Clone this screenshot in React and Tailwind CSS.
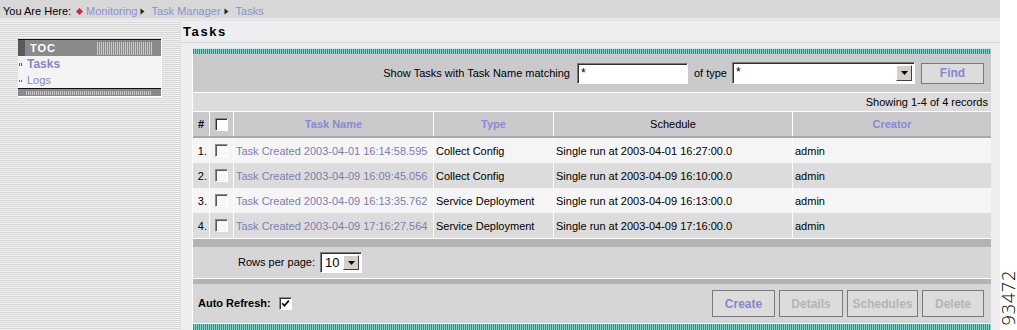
const rows = [
  ["1.", "Task Created 2003-04-01 16:14:58.595", "Collect Config", "Single run at 2003-04-01 16:27:00.0", "admin"],
  ["2.", "Task Created 2003-04-09 16:09:45.056", "Collect Config", "Single run at 2003-04-09 16:10:00.0", "admin"],
  ["3.", "Task Created 2003-04-09 16:13:35.762", "Service Deployment", "Single run at 2003-04-09 16:13:00.0", "admin"],
  ["4.", "Task Created 2003-04-09 17:16:27.564", "Service Deployment", "Single run at 2003-04-09 17:16:00.0", "admin"],
];

function Sep() {
  return (
    <svg width="5" height="7" viewBox="0 0 5 7" className="mx-[3px]">
      <path d="M0.5 0.5 L4.5 3.5 L0.5 6.5 Z" fill="#222" />
    </svg>
  );
}

function Check({ checked, header }) {
  return (
    <span
      className={
        "w-[13px] h-[13px] flex items-center justify-center border border-t-[#8a8a8a] border-l-[#8a8a8a] border-b-white border-r-white " +
        (header ? "bg-white shadow-[inset_1px_1px_0_#303030]" : "bg-[#f7f7f7] shadow-[inset_1px_1px_0_#5a5a5a]")
      }
    >
      {checked && (
        <svg width="9" height="9" viewBox="0 0 9 9">
          <path d="M1.2 4.3 L3.4 6.8 L7.8 1.6" stroke="#000" strokeWidth="1.7" fill="none" />
        </svg>
      )}
    </span>
  );
}

function ArrowBtn() {
  return (
    <span className="w-[16px] h-full flex items-center justify-center bg-[#d4d0c8] border border-t-white border-l-white border-r-[#404040] border-b-[#404040]">
      <svg width="7" height="4" viewBox="0 0 7 4">
        <path d="M0 0 L7 0 L3.5 4 Z" fill="#000" />
      </svg>
    </span>
  );
}

function Btn({ children, active }) {
  return (
    <span
      className={
        "h-[27px] flex items-center justify-center bg-[#dcdcdc] border border-[#7a7a7a] text-[12px] font-bold " +
        (active ? "text-[#8787c9]" : "text-[#b5b5b5]")
      }
    >
      {children}
    </span>
  );
}

const teal =
  "bg-[repeating-linear-gradient(to_right,#2a8f86_0px,#2a8f86_1px,#86d3cb_1px,#86d3cb_2px)]";

export default function App() {
  return (
    <div className="w-[1017px] h-[330px] overflow-hidden flex bg-white font-['Liberation_Sans',Arial,sans-serif] text-[11px] text-black leading-none">
      <div className="w-[1000px] flex flex-col">
        {/* breadcrumb */}
        <div className="h-[21px] shrink-0 flex items-center pl-[3px] pt-[1px] bg-[linear-gradient(to_bottom,#d8d8d8_0px,#d8d8d8_18px,#e6e6e6_18px)] text-[11px]">
          <span>You Are Here:</span>
          <span className="w-[5px] h-[5px] bg-[#e0203a] rotate-45 ml-[6px] mr-[4px]" />
          <span className="text-[#8f8fcf]">Monitoring</span>
          <Sep />
          <span className="ml-[3px] text-[#8f8fcf]">Task Manager</span>
          <Sep />
          <span className="ml-[4px] text-[#8f8fcf]">Tasks</span>
        </div>

        <div className="flex flex-1 min-h-0">
          {/* sidebar */}
          <div className="w-[180px] shrink-0 bg-[repeating-linear-gradient(to_bottom,#f2f2f2_0px,#f2f2f2_1px,#d6d6d6_1px,#d6d6d6_2px)] pt-[18px] pl-[18px]">
            <div className="w-[144px] flex flex-col border-r border-b border-white">
              <div className="h-[17px] flex bg-[#8a8a8a] border-t border-[#111]">
                <span className="w-[7px] bg-[#5a5a5a]" />
                <span className="pl-[5px] text-white font-bold text-[11px] tracking-[1px] self-center">TOC</span>
                <span className="flex-1" />
                <span className={"w-[55px] h-[13px] self-center bg-[repeating-linear-gradient(to_right,#c9c9c9_0px,#c9c9c9_1px,#8a8a8a_1px,#8a8a8a_2px)]"} />
                <span className="w-[9px]" />
              </div>
              <div className="h-[32px] bg-[#f3f3f3] flex flex-col">
                <div className="h-[16px] flex items-center">
                  <span className="ml-[1px] w-[4px] h-[3px] flex gap-[1px]">
                    <span className="w-[1px] h-[3px] bg-[#e02030]" />
                    <span className="w-[1px] h-[3px] bg-[#e02030]" />
                  </span>
                  <span className="ml-[4px] font-bold text-[12px] text-[#8585c8]">Tasks</span>
                </div>
                <div className="h-[16px] flex items-center">
                  <span className="ml-[1px] w-[4px] h-[2px] flex gap-[1px] mt-[1px]">
                    <span className="w-[1px] h-[2px] bg-[#5a6ab0]" />
                    <span className="w-[1px] h-[2px] bg-[#5a6ab0]" />
                  </span>
                  <span className="ml-[4px] text-[11px] text-[#8585c8]">Logs</span>
                </div>
              </div>
              <div className="h-[8px] bg-[#8a8a8a] border-t border-[#111] flex items-center pl-[8px] pr-[9px]">
                <span className="flex-1 h-[4px] bg-[repeating-linear-gradient(to_right,#c9c9c9_0px,#c9c9c9_1px,#8a8a8a_1px,#8a8a8a_2px)]" />
              </div>
            </div>
          </div>

          {/* content */}
          <div className="flex-1 bg-[#eeedf0] flex flex-col border-l border-dotted border-[#d8d8dc]">
            <div className="h-[22px] shrink-0 flex items-center pl-[2px] border-b border-[#d6d6d8]">
              <span className="text-[13px] font-bold tracking-[1.6px]">Tasks</span>
            </div>

            <div className="ml-[11px] mt-[5px] w-[799px] border-l border-white flex flex-col">
              <div className={"h-[6px] border-t border-[#cfe9e6] " + teal} />
              {/* filter */}
              <div className="h-[38px] bg-[#cbc9cc] flex items-center justify-end pr-[7px] text-[11px]">
                <span>Show Tasks with Task Name matching</span>
                <span className="ml-[7px] w-[111px] h-[21px] bg-white border border-t-[#7a7a7a] border-l-[#7a7a7a] border-r-white border-b-white shadow-[inset_1px_1px_0_#303030] pl-[3px] pt-[3px] text-[12px]">*</span>
                <span className="ml-[6px]">of type</span>
                <span className="ml-[5px] w-[183px] h-[22px] bg-white border border-t-[#7a7a7a] border-l-[#7a7a7a] border-r-white border-b-white shadow-[inset_1px_1px_0_#303030] flex p-[2px] pl-[3px]">
                  <span className="flex-1 text-[12px] pt-[1px]">*</span>
                  <ArrowBtn />
                </span>
                <span className="ml-[6px] w-[63px] h-[21px] flex items-center justify-center bg-[#dcdcdc] border border-[#7a7a7a] font-bold text-[12px] text-[#8787c9]">Find</span>
              </div>
              <div className="h-px bg-white" />
              <div className="h-[18px] bg-[#dcdcdc] flex items-center justify-end pr-[3px]">Showing 1-4 of 4 records</div>
              <div className="h-px bg-white" />

              {/* table */}
              <div className="grid grid-cols-[16px_23px_199px_119px_238px_1fr] gap-x-px bg-white">
                <div className="h-[24px] bg-[#cbc9cc] flex items-center justify-center font-bold">#</div>
                <div className="h-[24px] bg-[#cbc9cc] flex items-center justify-center"><Check header /></div>
                <div className="h-[24px] bg-[#cbc9cc] flex items-center justify-center font-bold text-[#8a8ad0]">Task Name</div>
                <div className="h-[24px] bg-[#cbc9cc] flex items-center justify-center font-bold text-[#8a8ad0]">Type</div>
                <div className="h-[24px] bg-[#cbc9cc] flex items-center justify-center">Schedule</div>
                <div className="h-[24px] bg-[#cbc9cc] flex items-center justify-center font-bold text-[#8a8ad0]">Creator</div>
              </div>
              <div className="h-[2px] bg-[#a9a9a9]" />
              <div className="flex flex-col">
                {rows.map((r, i) => {
                  const bg = i % 2 === 0 ? "bg-[#f5f5f5]" : "bg-[#dcdcdc]";
                  return (
                    <div key={i} className="grid grid-cols-[16px_23px_199px_119px_238px_1fr] gap-x-px bg-white h-[25px]">
                      <div className={bg + " flex items-center justify-end pr-[2px] pt-[1px]"}>{r[0]}</div>
                      <div className={bg + " flex items-center justify-center"}><Check /></div>
                      <div className={bg + " flex items-center pl-[2px] pt-[1px] text-[#7c7cb4]"}>{r[1]}</div>
                      <div className={bg + " flex items-center pl-[2px] pt-[1px]"}>{r[2]}</div>
                      <div className={bg + " flex items-center pl-[2px] pt-[1px]"}>{r[3]}</div>
                      <div className={bg + " flex items-center pl-[2px] pt-[1px]"}>{r[4]}</div>
                    </div>
                  );
                })}
              </div>
              <div className="h-px bg-white" />
              <div className="h-[8px] bg-[#b3b3b3]" />
              {/* rows per page */}
              <div className="h-[31px] bg-[#d6d6d6] flex items-center pl-[45px]">
                <span>Rows per page:</span>
                <span className="ml-[5px] w-[42px] h-[21px] bg-white border border-t-[#7a7a7a] border-l-[#7a7a7a] border-r-white border-b-white shadow-[inset_1px_1px_0_#303030] flex p-[2px]">
                  <span className="flex-1 text-[13px] pl-[2px] flex items-center">10</span>
                  <ArrowBtn />
                </span>
              </div>
              <div className="h-px bg-white" />
              <div className="h-[5px] bg-[#b3b3b3]" />
              {/* auto refresh */}
              <div className="h-[39px] bg-[#d6d6d6] flex items-center pl-[5px] pr-[7px]">
                <span className="font-bold">Auto Refresh:</span>
                <span className="ml-[8px]"><Check checked header /></span>
                <span className="flex-1" />
                <span className="flex gap-[4px]">
                  <span className="w-[63px]"><Btn active>Create</Btn></span>
                  <span className="w-[64px]"><Btn>Details</Btn></span>
                  <span className="w-[71px]"><Btn>Schedules</Btn></span>
                  <span className="w-[62px]"><Btn>Delete</Btn></span>
                </span>
              </div>
              <div className="h-px bg-white" />
              <div className={"h-[8px] " + teal} />
            </div>
          </div>
        </div>
      </div>
      <div className="w-[17px] shrink-0 flex flex-col justify-end items-center pb-[5px]">
        <span className="[writing-mode:vertical-rl] rotate-180 font-['Open_Sans',sans-serif] font-light text-[18px] tracking-[0.8px] leading-[15px]">93472</span>
      </div>
    </div>
  );
}
